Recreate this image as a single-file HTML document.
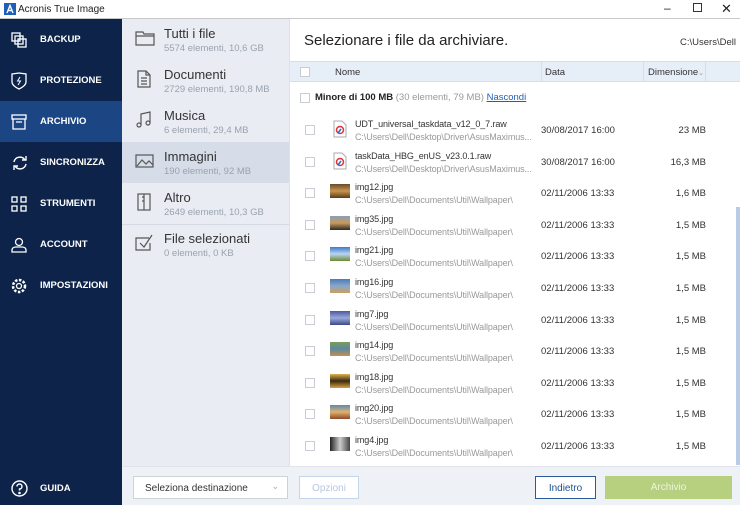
<!DOCTYPE html><html><head><meta charset="utf-8"><style>
*{margin:0;padding:0;box-sizing:border-box}
body{width:740px;height:505px;overflow:hidden;font-family:"Liberation Sans",sans-serif;background:#fff;position:relative}
.a{position:absolute}
.tb{left:0;top:0;width:740px;height:19px;background:#fff;border-bottom:1px solid #c8c8c8;font-size:10px;color:#222}
.side{left:0;top:19px;width:122px;height:486px;background:#0d2349}
.nav{position:absolute;left:0;width:122px;height:41px;color:#fff;font-size:9.5px;font-weight:bold;display:flex;align-items:center}
.nav span{position:absolute;left:40px}
.nav svg{position:absolute;left:11px}
.cat{left:122px;top:19px;width:167px;height:447px;background:#e9edf3}
.ci{position:absolute;left:0;width:167px;height:41px}
.ci .t{position:absolute;left:42px;top:7px;font-size:13px;color:#333}
.ci .s{position:absolute;left:42px;top:24px;font-size:9.5px;color:#9aa2ad}
.ci svg{position:absolute;left:13px;top:10px}
.row{position:absolute;left:289px;width:447px;height:31px;font-size:10px}
.cb{position:absolute;width:10px;height:10px;border:1px solid #c9cdd3;background:#fff}
.n{position:absolute;left:66px;top:4px;color:#333;font-size:9px;letter-spacing:-0.1px;white-space:nowrap}
.p{position:absolute;left:66px;top:17px;color:#999;font-size:9px;letter-spacing:-0.1px;white-space:nowrap}
.d{position:absolute;left:252px;top:10px;color:#333;font-size:9.5px}
.z{position:absolute;right:30px;top:10px;color:#333;font-size:9.5px}
.th{position:absolute;left:41px;top:6px;width:20px;height:14px}
</style></head><body>
<div class="a tb"><svg class="a" style="left:4px;top:3px" width="12" height="12"><rect width="12" height="12" fill="#1f5fb8"/><path d="M3 10L6 2.5L9 10M4.3 7.5H7.7" stroke="#fff" stroke-width="1.4" fill="none"/></svg><span class="a" style="left:18px;top:4px">Acronis True Image</span>
<span class="a" style="left:664px;top:1px;font-size:12px">–</span><span class="a" style="left:693px;top:3px;width:9px;height:9px;border:1px solid #333"></span><span class="a" style="left:721px;top:1px;font-size:13px">✕</span></div>
<div class="a side">
<div class="nav" style="top:0"><svg width="16" height="16" viewBox="0 0 16 16" fill="none" stroke="#fff" stroke-width="1.3"><rect x="1" y="1" width="8" height="8"/><rect x="4" y="4" width="8" height="8"/><rect x="7" y="7" width="8" height="8"/></svg><span>BACKUP</span></div>
<div class="nav" style="top:41px"><svg width="16" height="18" viewBox="0 0 16 18" fill="none" stroke="#fff" stroke-width="1.3"><path d="M1 2L8 1L15 2V10C15 14 8 17 8 17C8 17 1 14 1 10Z"/><path d="M9 5L6.5 9H9.5L7 13" stroke-width="1"/></svg><span>PROTEZIONE</span></div>
<div class="nav" style="top:82px;background:#1c4583"><svg width="16" height="16" viewBox="0 0 16 16" fill="none" stroke="#fff" stroke-width="1.3"><rect x="1" y="1" width="14" height="4"/><path d="M2 5V15H14V5M5 8H11"/></svg><span>ARCHIVIO</span></div>
<div class="nav" style="top:123px"><svg width="18" height="16" viewBox="0 0 18 16" fill="none" stroke="#fff" stroke-width="1.4"><path d="M3 7A6 6 0 0 1 14 5M15 9A6 6 0 0 1 4 11"/><path d="M11 5H15V1M7 11H3V15"/></svg><span>SINCRONIZZA</span></div>
<div class="nav" style="top:164px"><svg width="16" height="16" viewBox="0 0 16 16" fill="none" stroke="#fff" stroke-width="1.3"><rect x="1" y="1" width="5" height="5"/><rect x="10" y="1" width="5" height="5"/><rect x="1" y="10" width="5" height="5"/><rect x="10" y="10" width="5" height="5"/></svg><span>STRUMENTI</span></div>
<div class="nav" style="top:205px"><svg width="16" height="16" viewBox="0 0 16 16" fill="none" stroke="#fff" stroke-width="1.3"><circle cx="8" cy="5" r="3.5"/><path d="M1 15V13C1 11 3 10 5 10H11C13 10 15 11 15 13V15Z"/></svg><span>ACCOUNT</span></div>
<div class="nav" style="top:246px"><svg width="16" height="16" viewBox="0 0 16 16" fill="none" stroke="#fff" stroke-width="1.3"><circle cx="8" cy="8" r="2.5"/><circle cx="8" cy="8" r="6" stroke-dasharray="2.5 1.5" stroke-width="2.5"/></svg><span>IMPOSTAZIONI</span></div>
<div class="nav" style="top:449px"><svg width="17" height="17" viewBox="0 0 17 17" fill="none" stroke="#fff" stroke-width="1.4"><circle cx="8.5" cy="8.5" r="7.5"/><path d="M6 6.5A2.5 2.5 0 1 1 8.5 9V10.5"/><circle cx="8.5" cy="13" r=".6" fill="#fff"/></svg><span>GUIDA</span></div>
</div>
<div class="a cat">
<div class="ci" style="top:0"><svg width="20" height="18" viewBox="0 0 20 18" fill="none" stroke="#555" stroke-width="1.2"><path d="M1 3H8L9 5H19V16H1Z M1 7H19"/></svg><div class="t">Tutti i file</div><div class="s">5574 elementi, 10,6 GB</div></div>
<div class="ci" style="top:41px"><svg width="20" height="18" viewBox="0 0 20 18" fill="none" stroke="#555" stroke-width="1.2"><path d="M3 1H11L15 5V17H3Z M11 1V5H15 M6 8H12M6 11H12M6 14H12"/></svg><div class="t">Documenti</div><div class="s">2729 elementi, 190,8 MB</div></div>
<div class="ci" style="top:82px"><svg width="20" height="18" viewBox="0 0 20 18" fill="none" stroke="#555" stroke-width="1.2"><path d="M6 14V3L15 1V12"/><circle cx="4" cy="14" r="2"/><circle cx="13" cy="12" r="2"/></svg><div class="t">Musica</div><div class="s">6 elementi, 29,4 MB</div></div>
<div class="ci" style="top:123px;background:#d6dde8"><svg width="20" height="18" viewBox="0 0 20 18" fill="none" stroke="#555" stroke-width="1.2"><rect x="1" y="3" width="17" height="12"/><path d="M2 14L7 8L11 12L14 9L18 13"/></svg><div class="t">Immagini</div><div class="s">190 elementi, 92 MB</div></div>
<div class="ci" style="top:164px"><svg width="20" height="18" viewBox="0 0 20 18" fill="none" stroke="#555" stroke-width="1.2"><rect x="3" y="1" width="12" height="16"/><path d="M9 1V17M9 4h-2M9 8h-2"/></svg><div class="t">Altro</div><div class="s">2649 elementi, 10,3 GB</div></div>
<div style="position:absolute;left:0;top:205px;width:167px;border-top:1px solid #d5dae2"></div>
<div class="ci" style="top:205px"><svg width="20" height="18" viewBox="0 0 20 18" fill="none" stroke="#555" stroke-width="1.2"><path d="M14 4H1V16H15V9"/><path d="M5 9L9 13L17 1"/></svg><div class="t">File selezionati</div><div class="s">0 elementi, 0 KB</div></div>
</div>
<div class="a" style="left:289px;top:19px;width:1px;height:447px;background:#dde2e8"></div>
<div class="a" style="left:304px;top:32px;font-size:15px;color:#222">Selezionare i file da archiviare.</div>
<div class="a" style="left:680px;top:37px;font-size:9.5px;color:#333">C:\Users\Dell</div>
<div class="a" style="left:290px;top:61px;width:450px;height:21px;background:#e6eef8;border-top:1px solid #d4dfee;border-bottom:1px solid #d4dfee;font-size:9.5px;color:#333">
<div class="cb" style="left:10px;top:5px"></div><span class="a" style="left:45px;top:5px">Nome</span>
<div class="a" style="left:251px;top:0;height:20px;border-left:1px solid #d4dfee"></div><span class="a" style="left:255px;top:5px">Data</span>
<div class="a" style="left:353px;top:0;height:20px;border-left:1px solid #d4dfee"></div><span class="a" style="left:358px;top:5px">Dimensione<span style="color:#999;font-size:7px">⌄</span></span>
<div class="a" style="left:415px;top:0;height:20px;border-left:1px solid #d4dfee"></div></div>
<div class="cb a" style="left:300px;top:93px"></div>
<div class="a" style="left:315px;top:92px;font-size:9.5px;color:#222"><b style="font-weight:600">Minore di 100 MB</b> <span style="color:#999">(30 elementi, 79 MB)</span> <span style="color:#1f5fb8;text-decoration:underline">Nascondi</span></div>
<div class="a" style="left:736px;top:207px;width:4px;height:258px;background:#b9cbe6"></div>
<div id="rows"></div>
<div class="a" style="left:122px;top:466px;width:618px;height:39px;background:#eef1f5;border-top:1px solid #e0e4ea"></div>
<div class="a" style="left:133px;top:476px;width:155px;height:23px;background:#fff;border:1px solid #cdd3db;font-size:10px;color:#333;padding:6px 11px">Seleziona destinazione<span class="a" style="right:8px;top:4px;color:#aaa;font-size:9px">⌄</span></div>
<div class="a" style="left:299px;top:476px;width:60px;height:23px;background:#fff;border:1px solid #c6d6ea;font-size:10px;color:#b8c8de;text-align:center;padding-top:6px">Opzioni</div>
<div class="a" style="left:535px;top:476px;width:61px;height:23px;background:#fff;border:1px solid #2a5a9a;font-size:10px;color:#1f4f8f;text-align:center;padding-top:6px">Indietro</div>
<div class="a" style="left:605px;top:476px;width:127px;height:23px;background:#b6d07f;font-size:10px;color:#eef5de;text-align:center;padding-top:6px">Archivio</div>
<script>
var R=[["UDT_universal_taskdata_v12_0_7.raw","C:\\Users\\Dell\\Desktop\\Driver\\AsusMaximus...","30/08/2017 16:00","23 MB",0],
["taskData_HBG_enUS_v23.0.1.raw","C:\\Users\\Dell\\Desktop\\Driver\\AsusMaximus...","30/08/2017 16:00","16,3 MB",0],
["img12.jpg",0,"02/11/2006 13:33","1,6 MB","linear-gradient(#6a4a2a,#c8964c,#5a3a1a)"],
["img35.jpg",0,"02/11/2006 13:33","1,5 MB","linear-gradient(#8aa0b8,#c89a5a,#2a2a2a)"],
["img21.jpg",0,"02/11/2006 13:33","1,5 MB","linear-gradient(#3a7ad0,#bcd4f0 50%,#6a8a30)"],
["img16.jpg",0,"02/11/2006 13:33","1,5 MB","linear-gradient(#4a7ac0,#8aa8c8,#c8a060)"],
["img7.jpg",0,"02/11/2006 13:33","1,5 MB","linear-gradient(#4a5aa0,#9aa8d8,#3a4a8a)"],
["img14.jpg",0,"02/11/2006 13:33","1,5 MB","linear-gradient(#7a9a5a,#5a8aa0,#c8904a)"],
["img18.jpg",0,"02/11/2006 13:33","1,5 MB","linear-gradient(#e0b050,#3a2a10,#d8a040)"],
["img20.jpg",0,"02/11/2006 13:33","1,5 MB","linear-gradient(#5a8ab0,#e0b070,#8a4a2a)"],
["img4.jpg",0,"02/11/2006 13:33","1,5 MB","linear-gradient(90deg,#222,#ccc,#444)"]];
var h="";R.forEach(function(r,i){var t=115+i*31.6;
var ic=r[4]?'<div class="th" style="background:'+r[4]+'"></div>':'<svg class="a" style="left:44px;top:5px" width="14" height="18" viewBox="0 0 14 18"><path d="M1 1H9L13 5V17H1Z" fill="#fff" stroke="#aaa"/><circle cx="7" cy="10" r="3.5" fill="none" stroke="#d33" stroke-width="1.5"/><path d="M5 13L8 9" stroke="#36c" stroke-width="1.5"/></svg>';
h+='<div class="row" style="top:'+t+'px"><div class="cb" style="left:16px;top:10px"></div>'+ic+'<div class="n">'+r[0]+'</div><div class="p">'+(r[1]||"C:\\Users\\Dell\\Documents\\Util\\Wallpaper\\")+'</div><div class="d">'+r[2]+'</div><div class="z">'+r[3]+'</div></div>';});
document.getElementById("rows").innerHTML=h;
</script>
</body></html>
